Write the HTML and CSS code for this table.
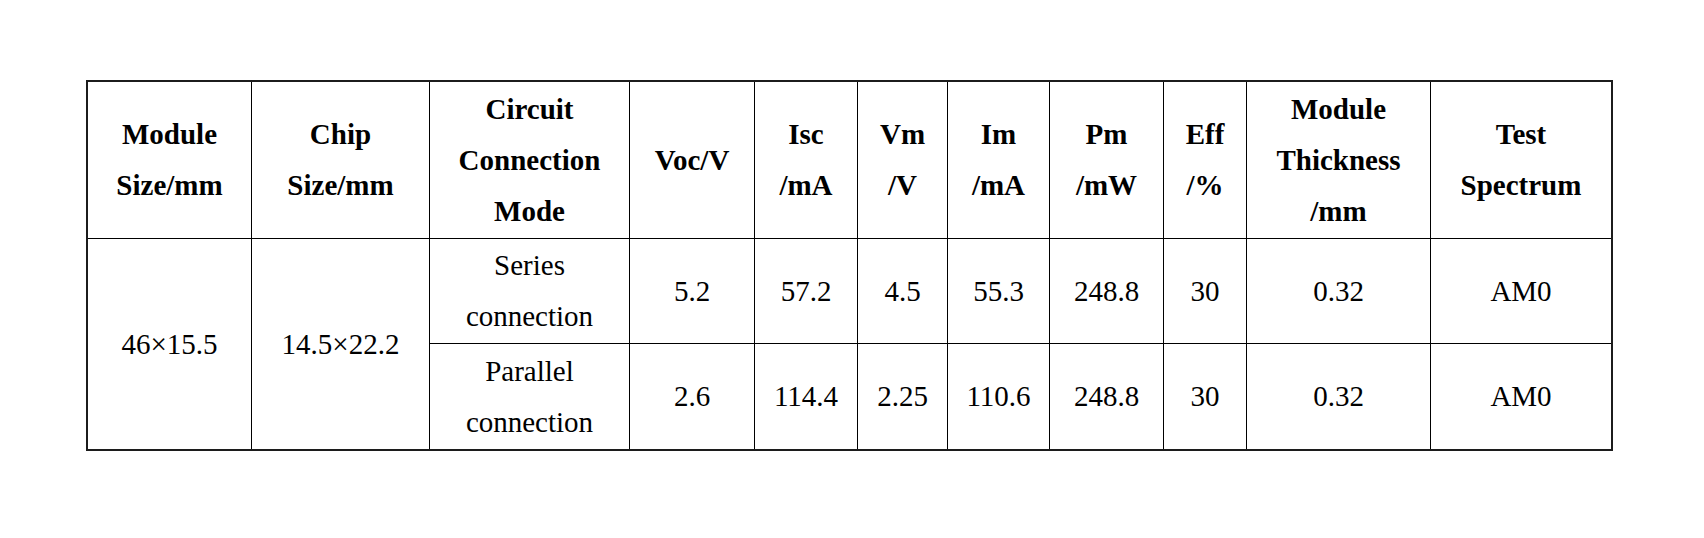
FILE: index.html
```html
<!DOCTYPE html>
<html lang="en">
<head>
<meta charset="utf-8">
<title>Module parameters</title>
<link rel="stylesheet" href="styles.css">
</head>
<body>
<div class="page">
  <div class="table">
    <div class="cell head">Module<br>Size/mm</div>
    <div class="cell head">Chip<br>Size/mm</div>
    <div class="cell head">Circuit<br>Connection<br>Mode</div>
    <div class="cell head">Voc/V</div>
    <div class="cell head">Isc<br>/mA</div>
    <div class="cell head">Vm<br>/V</div>
    <div class="cell head">Im<br>/mA</div>
    <div class="cell head">Pm<br>/mW</div>
    <div class="cell head">Eff<br>/%</div>
    <div class="cell head">Module<br>Thickness<br>/mm</div>
    <div class="cell head">Test<br>Spectrum</div>

    <div class="cell span2">46×15.5</div>
    <div class="cell span2">14.5×22.2</div>
    <div class="cell">Series<br>connection</div>
    <div class="cell">5.2</div>
    <div class="cell">57.2</div>
    <div class="cell">4.5</div>
    <div class="cell">55.3</div>
    <div class="cell">248.8</div>
    <div class="cell">30</div>
    <div class="cell">0.32</div>
    <div class="cell">AM0</div>

    <div class="cell">Parallel<br>connection</div>
    <div class="cell">2.6</div>
    <div class="cell">114.4</div>
    <div class="cell">2.25</div>
    <div class="cell">110.6</div>
    <div class="cell">248.8</div>
    <div class="cell">30</div>
    <div class="cell">0.32</div>
    <div class="cell">AM0</div>
  </div>
</div>
</body>
</html>
```
FILE: styles.css
```css
html, body {
  margin: 0;
  padding: 0;
  background: #fff;
}

.page {
  padding: 80px 0 0 86px;
  font-family: "Liberation Serif", "Times New Roman", serif;
  font-size: 29px;
  line-height: 51px;
  color: #000;
}

.table {
  display: inline-grid;
  grid-template-columns: 163px 177px 199px 124px 102px 89px 101px 113px 82px 183px 180px;
  grid-template-rows: 156px 104px 105px;
  gap: 1px;
  background: #000;
  border: 2px solid #1c1c1c;
}

.cell {
  background: #fff;
  display: flex;
  align-items: center;
  justify-content: center;
  text-align: center;
}

.head {
  font-weight: bold;
}

.span2 {
  grid-row: span 2;
}
```
